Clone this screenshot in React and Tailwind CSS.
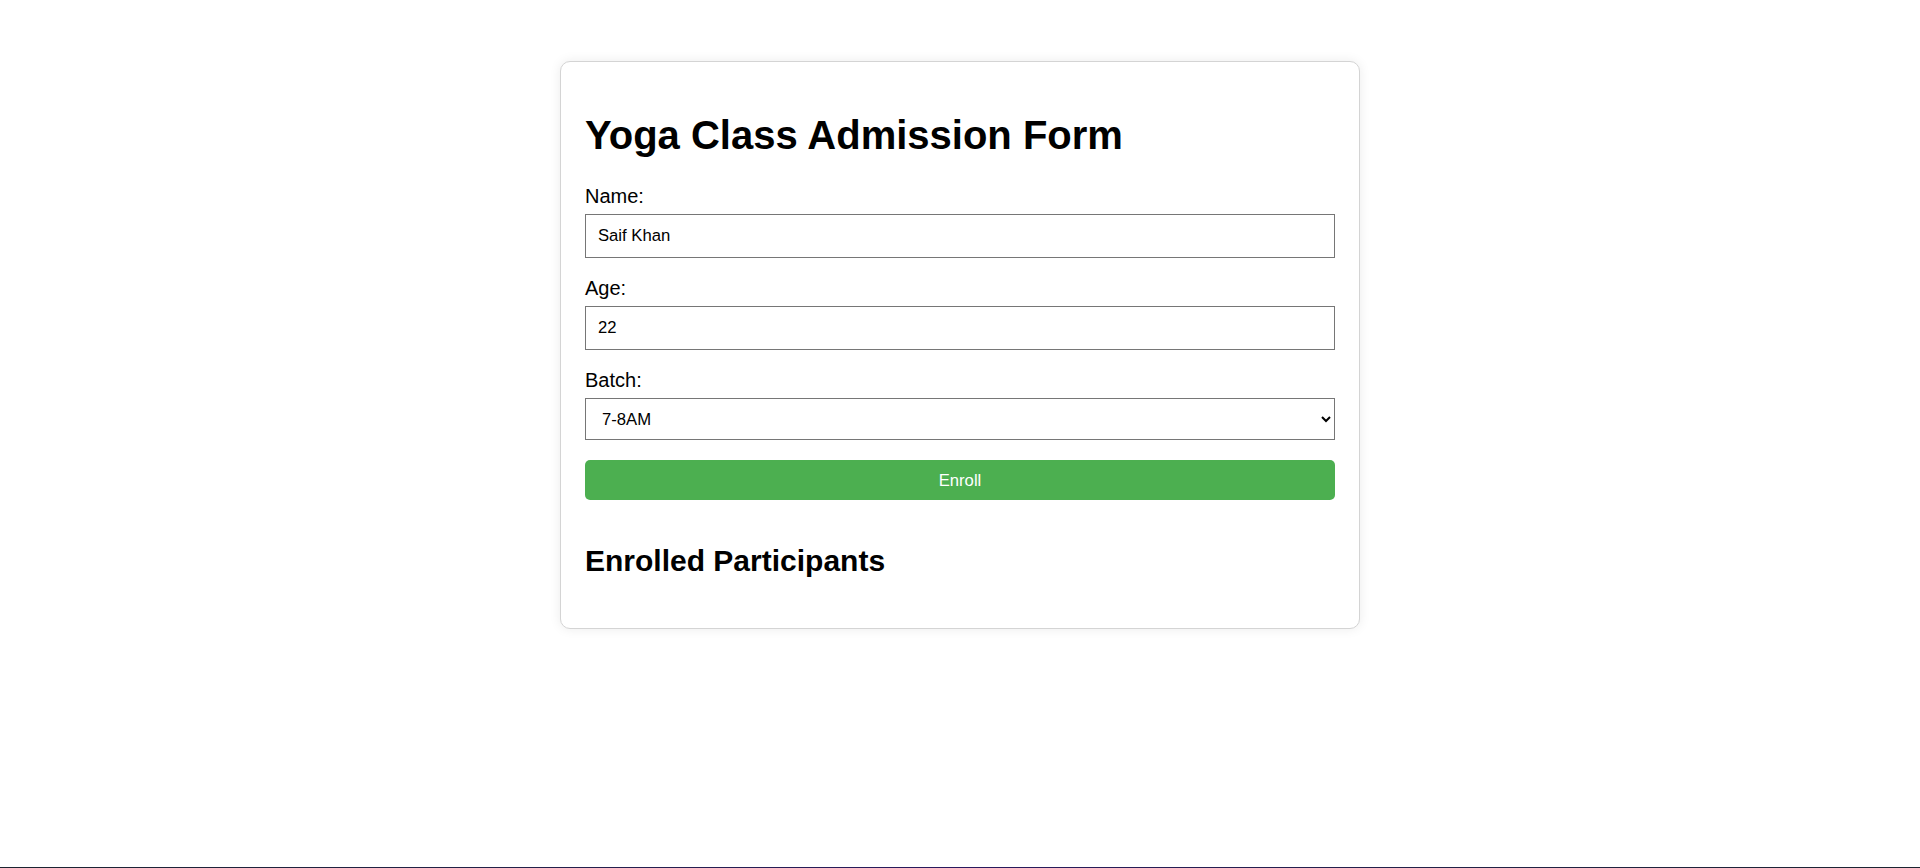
import React, { useState } from "react";

const App = () => {
  const [name, setName] = useState("Saif Khan");
  const [age, setAge] = useState("22");
  const [batch, setBatch] = useState("7-8AM");
  const [participants, setParticipants] = useState([]);

  const handleSubmit = (e) => {
    e.preventDefault();
    setParticipants([...participants, { name, age, batch }]);
  };

  return (
    <div className="h-[868px] flex flex-col bg-white font-['Liberation_Sans',Arial,sans-serif] text-black">
      <div className="flex-1 pt-[61px]">
        <div className="w-[800px] mx-auto bg-white border border-[#d4d4d4] rounded-[10px] shadow-[0_0_12px_rgba(0,0,0,0.08)] px-[24px] pt-[24px] pb-[25px]">
          <h1 className="text-[40px] leading-[46px] font-bold mt-[26px] mb-[27px]">Yoga Class Admission Form</h1>
          <form onSubmit={handleSubmit}>
            <label className="block text-[20px] leading-[23px] mb-[6px]">Name:</label>
            <input
              type="text"
              value={name}
              onChange={(e) => setName(e.target.value)}
              className="block w-full h-[44px] border border-[#767676] px-[12px] text-[16.67px] mb-[19px] outline-none"
            />
            <label className="block text-[20px] leading-[23px] mb-[6px]">Age:</label>
            <input
              type="number"
              value={age}
              onChange={(e) => setAge(e.target.value)}
              className="block w-full h-[44px] border border-[#767676] px-[12px] text-[16.67px] mb-[19px] outline-none [appearance:textfield]"
            />
            <label className="block text-[20px] leading-[23px] mb-[6px]">Batch:</label>
            <select
              value={batch}
              onChange={(e) => setBatch(e.target.value)}
              className="block w-full h-[42px] border border-[#767676] px-[12px] text-[16.67px] bg-white outline-none"
            >
              <option>6-7AM</option>
              <option>7-8AM</option>
              <option>8-9AM</option>
              <option>5-6PM</option>
            </select>
            <button
              type="submit"
              className="mt-[20px] w-full h-[40px] flex items-center justify-center bg-[#4caf50] text-white text-[16.67px] rounded-[5px] cursor-pointer"
            >
              Enroll
            </button>
          </form>
          <div className="pt-[19px]">
            <h2 className="text-[30px] leading-[34px] font-bold mt-[25px] mb-[25px]">Enrolled Participants</h2>
            <ul>
              {participants.map((p, i) => (
                <li key={i} className="text-[20px]">
                  {p.name} ({p.age}) - {p.batch}
                </li>
              ))}
            </ul>
          </div>
        </div>
      </div>
      <div className="h-px bg-gradient-to-r from-[#1c2430] via-[#2a1a5e] to-[#1c2430]" />
    </div>
  );
};

export default App;
